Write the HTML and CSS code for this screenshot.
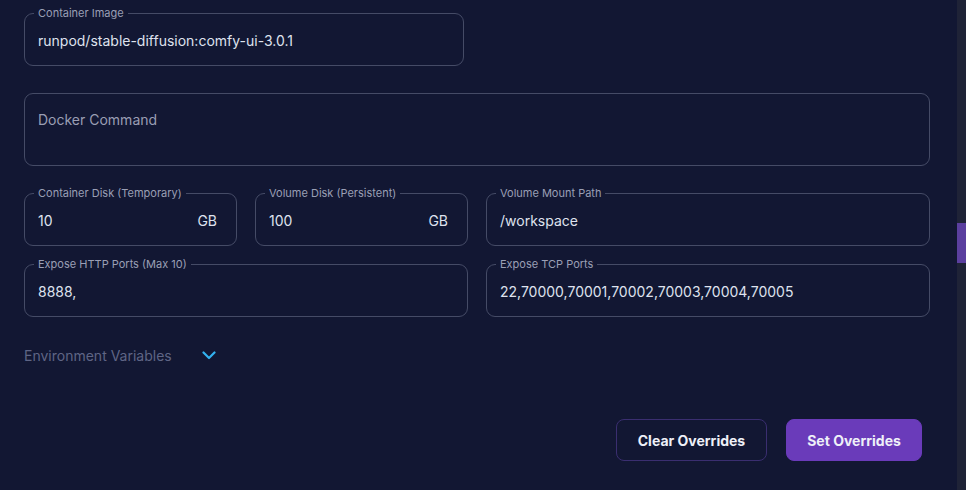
FILE: index.html
```html
<!DOCTYPE html>
<html lang="en">
<head>
<meta charset="utf-8">
<title>Pod Overrides</title>
<link rel="stylesheet" href="styles.css">
</head>
<body>
<div class="page">
  <main class="main">
    <div class="field field-image">
      <span class="label">Container Image</span>
      <div class="value">runpod/stable-diffusion:comfy-ui-3.0.1</div>
    </div>

    <div class="field field-cmd">
      <div class="placeholder">Docker Command</div>
    </div>

    <div class="grid">
      <div class="subgrid">
        <div class="field">
          <span class="label">Container Disk (Temporary)</span>
          <div class="value">10</div>
          <span class="unit">GB</span>
        </div>
        <div class="field">
          <span class="label">Volume Disk (Persistent)</span>
          <div class="value">100</div>
          <span class="unit">GB</span>
        </div>
      </div>
      <div class="field">
        <span class="label">Volume Mount Path</span>
        <div class="value">/workspace</div>
      </div>
      <div class="field">
        <span class="label">Expose HTTP Ports (Max 10)</span>
        <div class="value">8888,</div>
      </div>
      <div class="field">
        <span class="label">Expose TCP Ports</span>
        <div class="value">22,70000,70001,70002,70003,70004,70005</div>
      </div>
    </div>

    <div class="env">
      <span class="env-text">Environment Variables</span>
      <svg class="chev" width="14" height="9" viewBox="0 0 14 9"><path d="M1.5 1.5 L7 7 L12.5 1.5" fill="none" stroke="#33b2f0" stroke-width="2.2" stroke-linecap="round" stroke-linejoin="round"/></svg>
    </div>

    <div class="actions">
      <button class="btn btn-outline">Clear Overrides</button>
      <button class="btn btn-primary">Set Overrides</button>
    </div>
  </main>
  <div class="scrollbar"><div class="thumb"></div></div>
</div>
</body>
</html>
```

FILE: styles.css
```css
* { box-sizing: border-box; }
html, body {
  margin: 0;
  padding: 0;
  background: #121733;
  font-family: Inter, "Noto Sans", sans-serif;
  color: #e1e4f0;
}
.page {
  display: flex;
  height: 490px;
  overflow: hidden;
}
.main {
  flex: 1;
  padding: 13px 27px 0 24px;
}
.scrollbar {
  width: 9px;
  background: #1f2337;
  padding-top: 223px;
}
.thumb {
  height: 40px;
  background: #5b3f9f;
}
.field {
  position: relative;
  height: 53px;
  border: 1px solid #454b66;
  border-radius: 9px;
  display: flex;
  align-items: center;
  padding: 2px 13px 0 13px;
}
.label {
  position: absolute;
  top: -8px;
  left: 9px;
  padding: 0 4px;
  background: #121733;
  font-size: 11px;
  line-height: 14px;
  color: #9a9fb5;
  white-space: nowrap;
}
.value {
  flex: 1;
  font-size: 14px;
  line-height: 20px;
  color: #dfe2ee;
  white-space: nowrap;
}
.unit {
  font-size: 14px;
  line-height: 20px;
  color: #dfe2ee;
  padding-right: 6px;
}
.field-image {
  width: 440px;
}
.field-cmd {
  margin-top: 27px;
  height: 73px;
  align-items: flex-start;
  padding-top: 16px;
}
.placeholder {
  font-size: 14px;
  line-height: 20px;
  color: #9a9eb4;
}
.grid {
  margin-top: 27px;
  display: grid;
  grid-template-columns: 1fr 1fr;
  gap: 18px;
}
.subgrid {
  display: grid;
  grid-template-columns: 1fr 1fr;
  gap: 18px;
}
.env {
  margin-top: 29px;
  height: 20px;
  display: flex;
  align-items: center;
  gap: 30px;
}
.env-text {
  font-size: 14px;
  line-height: 20px;
  color: #5f6585;
}
.chev {
  display: block;
  margin-top: -1px;
}
.actions {
  margin-top: 53px;
  display: flex;
  justify-content: flex-end;
  gap: 19px;
  padding-right: 8px;
}
.btn {
  height: 42px;
  border-radius: 8px;
  font-family: Inter, "Noto Sans", sans-serif;
  font-size: 14px;
  font-weight: 700;
  color: #eef0f8;
  padding: 0;
  white-space: nowrap;
  cursor: pointer;
}
.btn-outline {
  background: transparent;
  border: 1px solid #3a2e70;
  width: 151px;
}
.btn-primary {
  background: #6a3bba;
  border: 1px solid #6a3bba;
  width: 136px;
}
```
